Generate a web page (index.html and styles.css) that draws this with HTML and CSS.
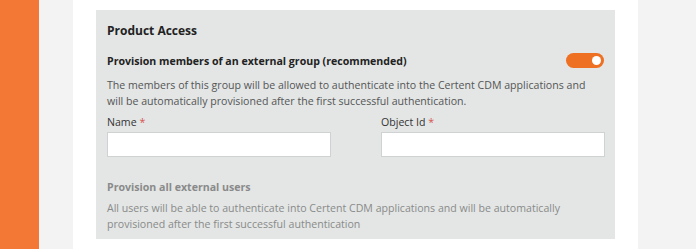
FILE: index.html
```html
<!DOCTYPE html>
<html>
<head>
<meta charset="utf-8">
<link rel="stylesheet" href="styles.css">
</head>
<body>
<div class="page">
  <div class="sidebar"></div>
  <div class="gutter"></div>
  <div class="main">
    <section class="panel">
      <h2 class="title">Product Access</h2>
      <div class="option-head">
        <h3 class="subtitle">Provision members of an external group (recommended)</h3>
        <span class="toggle"><span class="knob"></span></span>
      </div>
      <p class="desc">The members of this group will be allowed to authenticate into the Certent CDM applications and will be automatically provisioned after the first successful authentication.</p>
      <div class="fields">
        <label class="field">
          <span class="label">Name <span class="req">*</span></span>
          <input class="input" type="text">
        </label>
        <label class="field">
          <span class="label">Object Id <span class="req">*</span></span>
          <input class="input" type="text">
        </label>
      </div>
      <h3 class="subtitle muted second">Provision all external users</h3>
      <p class="desc muted second-desc">All users will be able to authenticate into Certent CDM applications and will be automatically provisioned after the first successful authentication</p>
    </section>
  </div>
  <div class="right"></div>
</div>
</body>
</html>
```

FILE: styles.css
```css
html, body { margin: 0; padding: 0; }
body { font-family: "Open Sans", "Noto Sans", sans-serif; color: #222; }
.page { display: flex; height: 249px; }
.sidebar { width: 39px; background: #f47835; }
.gutter { width: 34px; background: #f3f3f3; }
.main { width: 519px; background: #fff; padding: 10px 23px 0 23px; }
.right { flex: 1; background: #f3f3f3; }
.panel { background: #e3e6e5; height: 229px; box-sizing: border-box; padding: 12px 11px 0 11px; }
.title { margin: 0; font-size: 12px; font-weight: 700; line-height: 18px; }
.option-head { display: flex; justify-content: space-between; align-items: center; margin-top: 13px; }
.subtitle { margin: 0; font-size: 10.6px; font-weight: 700; line-height: 16px; }
.toggle { width: 38px; height: 15px; border-radius: 8px; background: #ee7023; display: flex; align-items: center; justify-content: flex-end; padding-right: 3px; box-sizing: border-box; margin-top: -1px; }
.knob { width: 9px; height: 9px; border-radius: 50%; background: #fff; }
.desc { margin: 8px 0 0; font-size: 10.6px; line-height: 16px; color: #555; max-width: 488px; }
.fields { display: grid; grid-template-columns: 224px 224px; column-gap: 50px; margin-top: 6px; }
.field { display: flex; flex-direction: column; gap: 3px; }
.label { font-size: 10.6px; line-height: 14px; color: #333; }
.req { color: #d9534f; }
.input { height: 25px; box-sizing: border-box; border: 1px solid #cfd2d2; background: #fff; margin: 0; }
.muted { color: #8a8a8a; }
.second { margin-top: 22px; }
.second-desc { margin-top: 5px; max-width: none; }
```
